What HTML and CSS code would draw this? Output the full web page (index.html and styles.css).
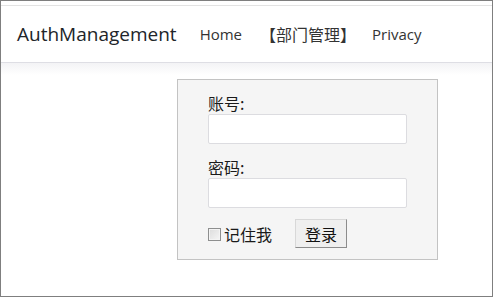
FILE: index.html
```html
<!DOCTYPE html>
<html lang="zh">
<head>
    <meta charset="UTF-8">
    <meta name="viewport" content="width=device-width, initial-scale=1.0">
    <title>AuthManagement</title>
    <link rel="stylesheet" href="styles.css">
</head>
<body>
    <div class="frame">
        <div class="topline"></div>
        <nav class="navbar">
            <a class="brand" href="#">AuthManagement</a>
            <a class="nav-link" href="#">Home</a>
            <a class="nav-link cjk" href="#">【部门管理】</a>
            <a class="nav-link" href="#">Privacy</a>
        </nav>
        <div class="shade"></div>
        <form class="login-box">
            <label class="field-label" for="account">账号:</label>
            <input class="field" type="text" id="account">
            <label class="field-label second" for="password">密码:</label>
            <input class="field" type="password" id="password">
            <div class="login-row">
                <label class="remember"><input type="checkbox" class="check">记住我</label>
                <button type="button" class="login-btn">登录</button>
            </div>
        </form>
    </div>
</body>
</html>
```

FILE: styles.css
```css
body {
    margin: 0;
    font-family: "Open Sans", "Noto Sans CJK SC", sans-serif;
    background-color: #fff;
}

.frame {
    box-sizing: border-box;
    height: 297px;
    border: 1px solid #7f7f7f;
    overflow: hidden;
}

.topline {
    height: 4px;
    border-bottom: 1px solid #e3e3e3;
}

.navbar {
    display: flex;
    align-items: center;
    height: 56px;
    padding-left: 16px;
    border-bottom: 1px solid #dedee4;
}

.shade {
    height: 12px;
    margin-bottom: -12px;
    background: linear-gradient(#f3f3f5, #fff);
}

.brand {
    font-size: 19px;
    color: #212529;
    text-decoration: none;
    margin-right: 23px;
}

.nav-link {
    font-size: 15px;
    color: #333;
    text-decoration: none;
    margin-right: 14px;
}

.nav-link.cjk {
    font-size: 16px;
    margin-left: 4px;
    margin-right: 16px;
}

.login-box {
    width: 229px;
    margin: 16px 0 0 176px;
    padding: 13px 0 11px 30px;
    background-color: #f5f5f5;
    border: 1px solid #c3c3c3;
    font-family: "Noto Sans CJK SC", sans-serif;
    font-size: 16px;
    color: #1a1a1a;
}

.field-label {
    display: block;
    line-height: 20px;
}

.field-label.second {
    margin-top: 13px;
}

.field {
    display: block;
    box-sizing: border-box;
    width: 199px;
    height: 30px;
    margin: 1px 0 0;
    border: 1px solid #dcdce0;
    border-radius: 2px;
    background: #fff;
}

.login-row {
    display: flex;
    align-items: center;
    margin-top: 11px;
}

.remember {
    display: flex;
    align-items: center;
    width: 87px;
}

.check {
    appearance: none;
    box-sizing: border-box;
    width: 13px;
    height: 13px;
    margin: 1px 3px 0 0;
    border: 1px solid #8e8f8f;
    background: linear-gradient(135deg, #dcdcdc, #f6f6f6);
    box-shadow: inset 0 0 0 1px #f4f4f4;
}

.login-btn {
    height: 29px;
    width: 52px;
    padding: 0;
    font-family: "Noto Sans CJK SC", sans-serif;
    font-size: 16px;
    color: #111;
    background: #efefef;
    border: 1px solid;
    border-color: #d8d8d8 #8c8c8c #8c8c8c #d8d8d8;
}
```
